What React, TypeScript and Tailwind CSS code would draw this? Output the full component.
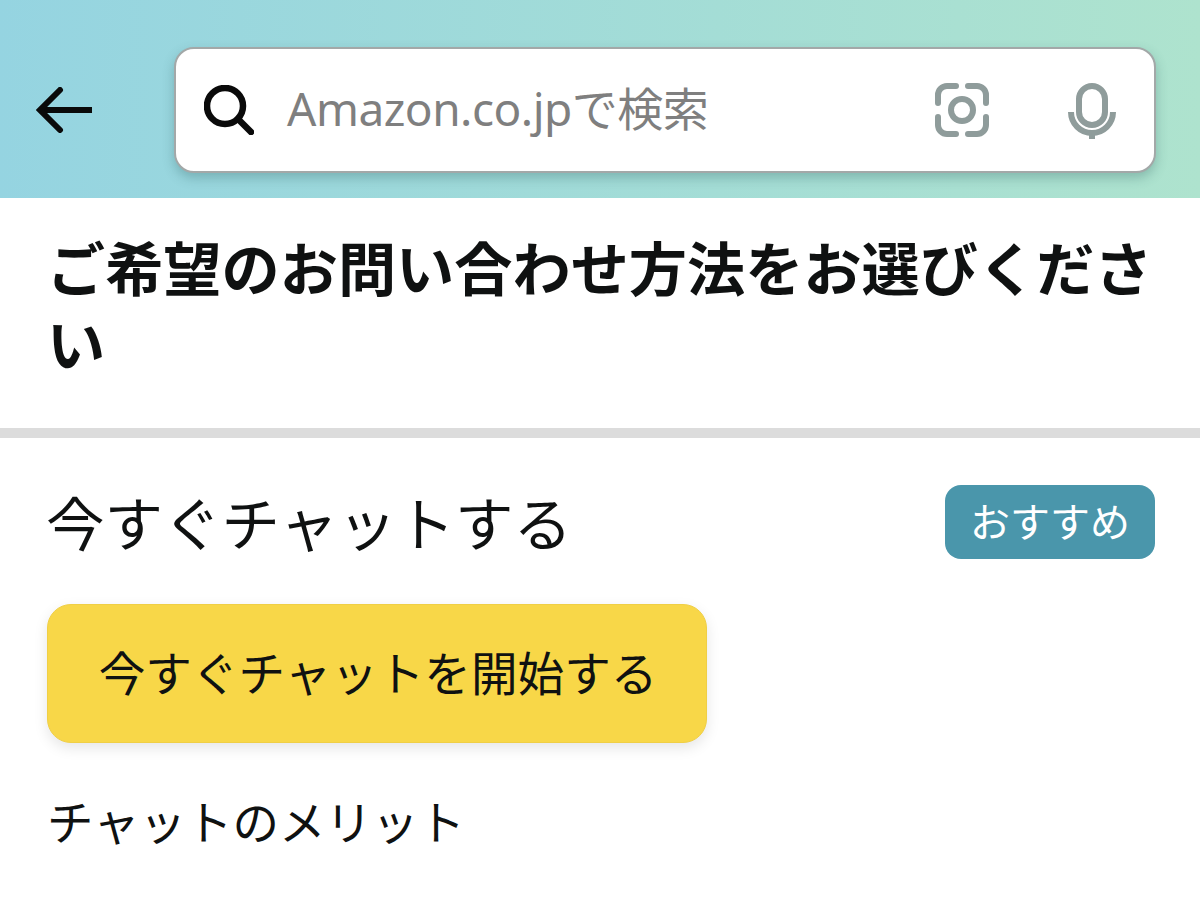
const jpFont = "font-['Noto_Sans','Noto_Sans_CJK_JP',sans-serif]";

function BackArrow() {
	return (
		<svg width="56" height="46" viewBox="0 0 56 46" fill="none" stroke="#0a0a0a" strokeWidth="6">
			<path d="M4 23H56" />
			<path d="M24 3L4 23L24 43" strokeLinecap="round" />
		</svg>
	);
}

function SearchIcon() {
	return (
		<svg width="50" height="50" viewBox="0 0 50 50" fill="none" stroke="#0a0a0a" strokeWidth="6.5" className="shrink-0">
			<circle cx="21" cy="21" r="18" />
			<path d="M34 34L47 47" strokeLinecap="round" />
		</svg>
	);
}

function CameraIcon() {
	return (
		<svg width="54" height="54" viewBox="0 0 54 54" fill="none" stroke="#8f9c9b" strokeWidth="6" strokeLinecap="round" className="mb-[1px]">
			<path d="M3 20V12a9 9 0 0 1 9-9h9" />
			<path d="M33 3h9a9 9 0 0 1 9 9v8" />
			<path d="M51 34v8a9 9 0 0 1-9 9h-9" />
			<path d="M21 51h-9a9 9 0 0 1-9-9v-8" />
			<circle cx="27" cy="27" r="11" />
		</svg>
	);
}

function MicIcon() {
	return (
		<svg width="48" height="56" viewBox="0 0 48 56" fill="none" stroke="#8f9c9b" strokeWidth="6" className="mt-[1px]">
			<rect x="11" y="3" width="26" height="39" rx="13" />
			<path d="M3 29a21 21 0 0 0 42 0" />
			<path d="M24 48v8" />
		</svg>
	);
}

export default function App() {
	return (
		<div className={`w-[1200px] h-[900px] overflow-hidden bg-white ${jpFont}`}>
			<header className="h-[198px] flex items-start bg-gradient-to-r from-[#95d4e1] to-[#aee3ce]">
				<div className="w-[174px] h-[198px] flex items-center pl-[36px] pt-[22px] shrink-0">
					<BackArrow />
				</div>
				<div className="mt-[47px] w-[982px] h-[126px] flex items-center bg-white rounded-[20px] border-2 border-[#a3a8a8] shadow-[0_5px_12px_rgba(40,90,90,0.3)] pl-[28px] pr-[38px]">
					<SearchIcon />
					<span className="ml-[33px] mb-[4px] text-[46px] leading-none text-[#7f7f7f] flex-1 tracking-[-0.5px]">Amazon.co.jpで検索</span>
					<CameraIcon />
					<div className="w-[79px]" />
					<MicIcon />
				</div>
			</header>

			<div className="h-[230px] pl-[47px] pt-[33px]">
				<h1 className="w-[1125px] text-[58.2px] leading-[76px] font-bold text-[#0f1111] break-all">ご希望のお問い合わせ方法をお選びください</h1>
			</div>
			<div className="h-[10px] bg-[#dcdcdc]" />

			<section className="pl-[46px] pr-[45px]">
				<div className="flex items-center justify-between pt-[47px]">
					<h2 className="text-[58.5px] leading-[76px] text-[#0f1111] font-normal">今すぐチャットする</h2>
					<span className="w-[210px] h-[74px] mb-[2px] flex items-center justify-center rounded-[16px] bg-[#4a96ab] text-white text-[40px] leading-none">おすすめ</span>
				</div>
				<button className={`mt-[43px] ml-[1px] block w-[660px] h-[139px] rounded-[24px] bg-[#f8d748] border border-[#f0cf45] shadow-[0_5px_14px_rgba(0,0,0,0.1)] pl-[2px] text-[46.6px] leading-none text-[#0f1111] ${jpFont}`}>今すぐチャットを開始する</button>
				<p className="mt-[47px] pl-[1px] text-[46.5px] leading-[64px] text-[#0f1111]">チャットのメリット</p>
			</section>
		</div>
	);
}
